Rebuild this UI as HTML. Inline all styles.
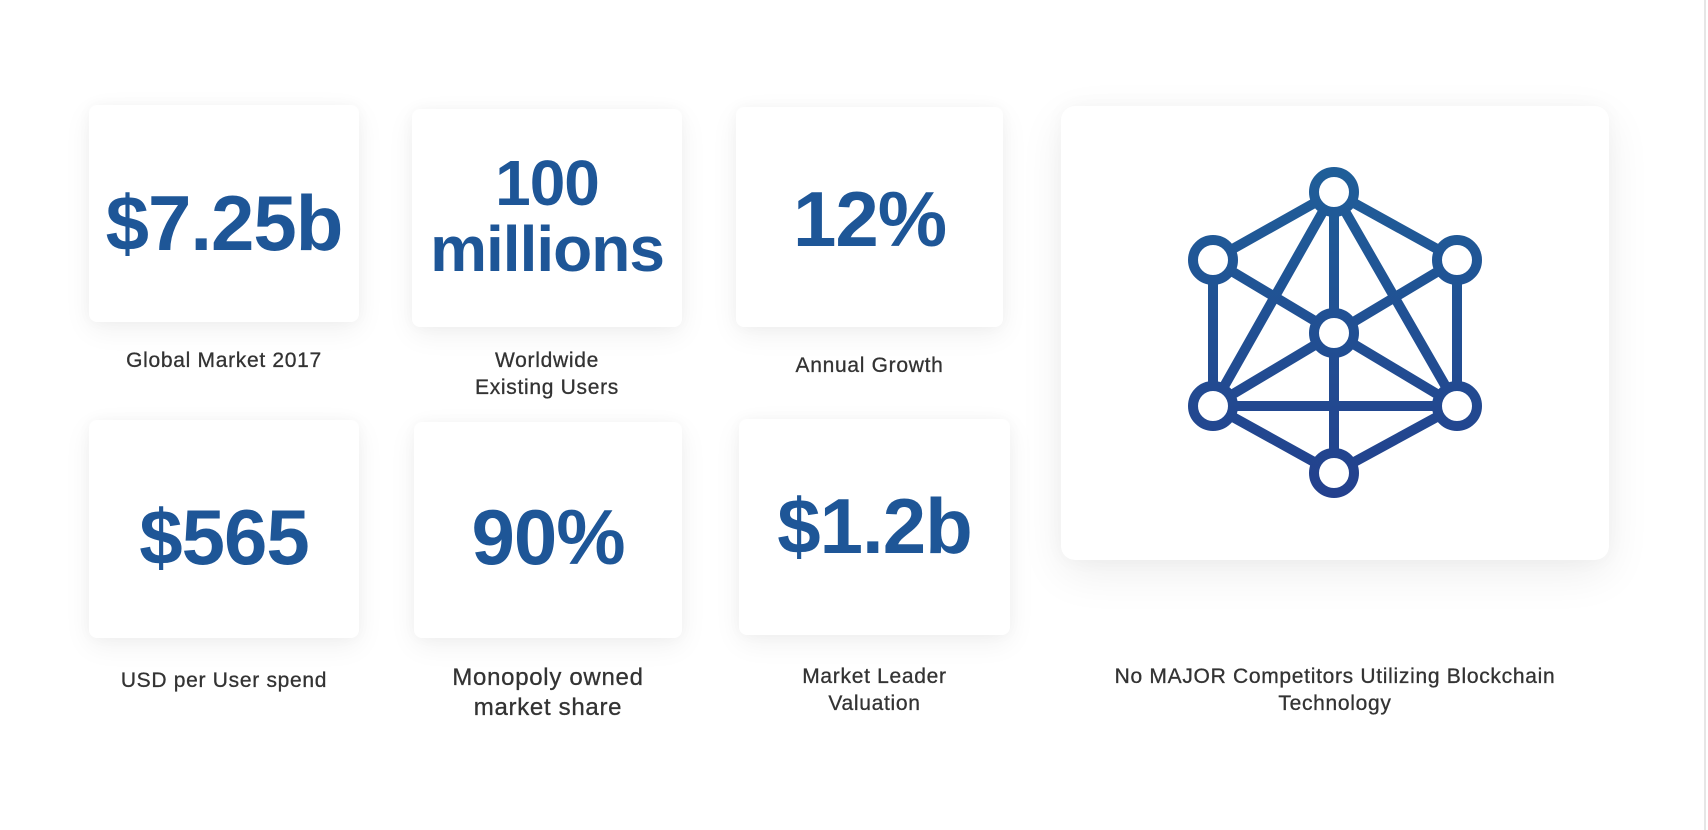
<!DOCTYPE html>
<html><head><meta charset="utf-8"><style>
body{margin:0;width:1708px;height:830px;background:#fff;position:relative;overflow:hidden;font-family:"Liberation Sans",sans-serif}
.c{position:absolute;background:#fff;border-radius:8px;box-shadow:0 8px 28px rgba(0,0,0,0.06),0 0 14px rgba(0,0,0,0.03)}
.n{position:absolute;color:#1e5697;font-weight:bold;font-size:78px;text-align:center;line-height:1;letter-spacing:-1px}
.l{position:absolute;color:#333;font-size:21px;text-align:center;line-height:27px;letter-spacing:0.7px;-webkit-text-stroke:0.3px #333}
</style></head><body>
<div class="c" style="left:89px;top:105px;width:270px;height:217px"></div>
<div class="c" style="left:412px;top:109px;width:270px;height:218px"></div>
<div class="c" style="left:736px;top:107px;width:267px;height:220px"></div>
<div class="c" style="left:1061px;top:106px;width:548px;height:454px;border-radius:14px;box-shadow:0 14px 45px rgba(0,0,0,0.07),0 0 20px rgba(0,0,0,0.03)"></div>
<div class="c" style="left:89px;top:420px;width:270px;height:218px"></div>
<div class="c" style="left:414px;top:422px;width:268px;height:216px"></div>
<div class="c" style="left:739px;top:419px;width:271px;height:216px"></div>
<div style="position:absolute;left:1704px;top:0;width:2px;height:830px;background:#e6e6e6"></div>

<div class="n" style="left:89px;width:270px;top:184px">$7.25b</div>
<div class="n" style="left:412px;width:270px;top:150px;font-size:64px;line-height:66px">100<br>millions</div>
<div class="n" style="left:736px;width:267px;top:180px">12%</div>
<div class="n" style="left:89px;width:270px;top:498px">$565</div>
<div class="n" style="left:414px;width:268px;top:498px">90%</div>
<div class="n" style="left:739px;width:271px;top:487px">$1.2b</div>

<div class="l" style="left:89px;width:270px;top:347px">Global Market 2017</div>
<div class="l" style="left:412px;width:270px;top:347px">Worldwide<br>Existing Users</div>
<div class="l" style="left:736px;width:267px;top:352px">Annual Growth</div>
<div class="l" style="left:89px;width:270px;top:667px">USD per User spend</div>
<div class="l" style="left:404px;width:288px;top:663px;font-size:24px;line-height:30px">Monopoly owned<br>market share</div>
<div class="l" style="left:729px;width:291px;top:663px">Market Leader<br>Valuation</div>
<div class="l" style="left:1041px;width:588px;top:663px">No MAJOR Competitors Utilizing Blockchain<br>Technology</div>

<svg style="position:absolute;left:0;top:0" width="1708" height="830">
<defs><linearGradient id="g" x1="0" y1="160" x2="0" y2="500" gradientUnits="userSpaceOnUse"><stop offset="0" stop-color="#1f5f99"/><stop offset="1" stop-color="#23408d"/></linearGradient></defs>
<g stroke="url(#g)" stroke-width="10" fill="none">
<path d="M1334 192L1213 260L1213 406L1334 473L1457 406L1457 260Z"/>
<path d="M1334 192L1213 406M1334 192L1457 406M1334 192L1334 473M1213 260L1457 406M1457 260L1213 406M1213 406L1457 406"/>
<g fill="#fff"><circle cx="1334" cy="192" r="20"/><circle cx="1213" cy="260" r="20"/><circle cx="1457" cy="260" r="20"/><circle cx="1334" cy="333" r="20"/><circle cx="1213" cy="406" r="20"/><circle cx="1457" cy="406" r="20"/><circle cx="1334" cy="473" r="20"/></g>
</g></svg>
</body></html>
